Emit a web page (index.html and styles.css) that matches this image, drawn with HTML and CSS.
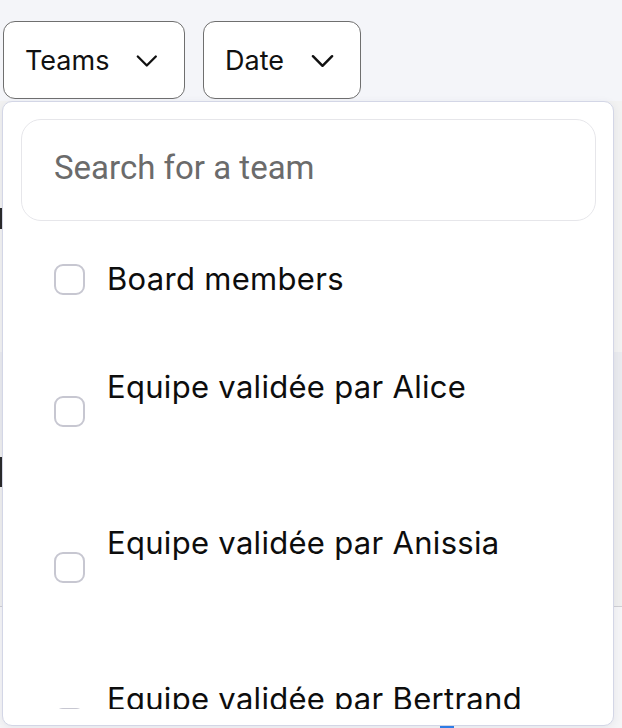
FILE: index.html
```html
<!DOCTYPE html>
<html lang="en">
<head>
<meta charset="utf-8">
<title>Teams filter</title>
<link rel="stylesheet" href="styles.css">
</head>
<body>
<div class="page">
  <div class="toolbar">
    <button class="filter-btn teams-btn">
      <span>Teams</span>
      <svg class="chev" viewBox="0 0 24 14" width="24" height="14"><path d="M2 2 L12 12 L22 2" fill="none" stroke="#111" stroke-width="2.6" stroke-linecap="round" stroke-linejoin="round"/></svg>
    </button>
    <button class="filter-btn date-btn">
      <span>Date</span>
      <svg class="chev" viewBox="0 0 24 14" width="24" height="14"><path d="M2 2 L12 12 L22 2" fill="none" stroke="#111" stroke-width="2.6" stroke-linecap="round" stroke-linejoin="round"/></svg>
    </button>
  </div>
  <div class="content">
    <div class="row row-a"><span class="mark"></span></div>
    <div class="row row-b"></div>
    <div class="row row-c"><span class="mark tall"></span></div>
    <div class="row row-d"><span class="blue"></span></div>
  </div>

  <div class="dropdown">
    <div class="search">Search for a team</div>
    <div class="list">
      <label class="item">
        <span class="box"></span>
        <span class="texts"><span class="label">Board members</span></span>
      </label>
      <label class="item">
        <span class="box"></span>
        <span class="texts"><span class="label">Equipe validée par Alice</span><span class="sub"></span></span>
      </label>
      <label class="item">
        <span class="box"></span>
        <span class="texts"><span class="label">Equipe validée par Anissia</span><span class="sub"></span></span>
      </label>
      <label class="item">
        <span class="box"></span>
        <span class="texts"><span class="label">Equipe validée par Bertrand</span><span class="sub"></span></span>
      </label>
    </div>
  </div>
</div>
</body>
</html>
```
FILE: styles.css
```css
* { box-sizing: border-box; }
html, body { margin: 0; padding: 0; }
body {
  width: 622px;
  height: 728px;
  overflow: hidden;
  background: #f4f5f9;
  font-family: "Inter", "Noto Sans", sans-serif;
  color: #111;
}
.page {
  position: relative;
  width: 622px;
  height: 728px;
}
.toolbar {
  display: flex;
  gap: 18px;
  padding: 21px 0 0 3px;
  height: 101px;
}
.filter-btn {
  display: flex;
  align-items: center;
  height: 78px;
  background: #fff;
  border: 1.5px solid #6f6f6f;
  border-radius: 12px;
  font-family: "Inter", sans-serif;
  font-size: 27px;
  color: #111;
  padding: 0 26px 0 21px;
  gap: 27px;
}
.teams-btn { width: 182px; }
.date-btn { width: 158px; }
.chev { display: block; margin-top: 2px; }

.content {
  height: 627px;
  display: flex;
  flex-direction: column;
}
.row { flex: none; }
.row-a { height: 251px; background: #f2f2f2; }
.row-b { height: 88px; background: #eaebef; }
.row-c { height: 167px; background: #efefef; border-bottom: 1px solid #cfcfd4; }
.row-d { flex: 1; background: #f5f5f7; }
.mark {
  display: block;
  width: 3px;
  height: 21px;
  background: #2a2a2a;
  margin-top: 107px;
}
.mark.tall { height: 30px; margin-top: 17px; }
.blue {
  display: block;
  width: 14px;
  height: 4px;
  background: #2f80ed;
  margin: 117px 0 0 440px;
}

.dropdown {
  position: absolute;
  left: 2px;
  top: 101px;
  width: 612px;
  height: 625px;
  background: #fff;
  border: 1px solid #d3d6e6;
  border-radius: 10px;
  box-shadow: 0 2px 8px rgba(40, 50, 90, 0.08);
  padding: 17px 17px 16px 18px;
  display: flex;
  flex-direction: column;
  overflow: hidden;
}
.search {
  flex: none;
  height: 102px;
  border: 1.5px solid #e6e6ea;
  border-radius: 20px;
  display: flex;
  align-items: center;
  padding: 0 0 5px 32px;
  font-family: "Roboto", sans-serif;
  font-size: 33px;
  color: #6b6b6b;
}
.list {
  flex: 1;
  overflow: hidden;
  display: flex;
  flex-direction: column;
  padding-top: 4px;
}
.item {
  flex: none;
  display: flex;
  align-items: center;
  padding: 30px 0 30px 33px;
  gap: 22px;
}
.box {
  flex: none;
  width: 31px;
  height: 31px;
  border: 2px solid #c7c7d1;
  border-radius: 9px;
  background: #fff;
}
.texts { display: flex; flex-direction: column; }
.label {
  font-size: 31px;
  line-height: 48px;
  letter-spacing: 0.3px;
  color: #0d0d0d;
}
.sub { display: block; height: 48px; }
```
